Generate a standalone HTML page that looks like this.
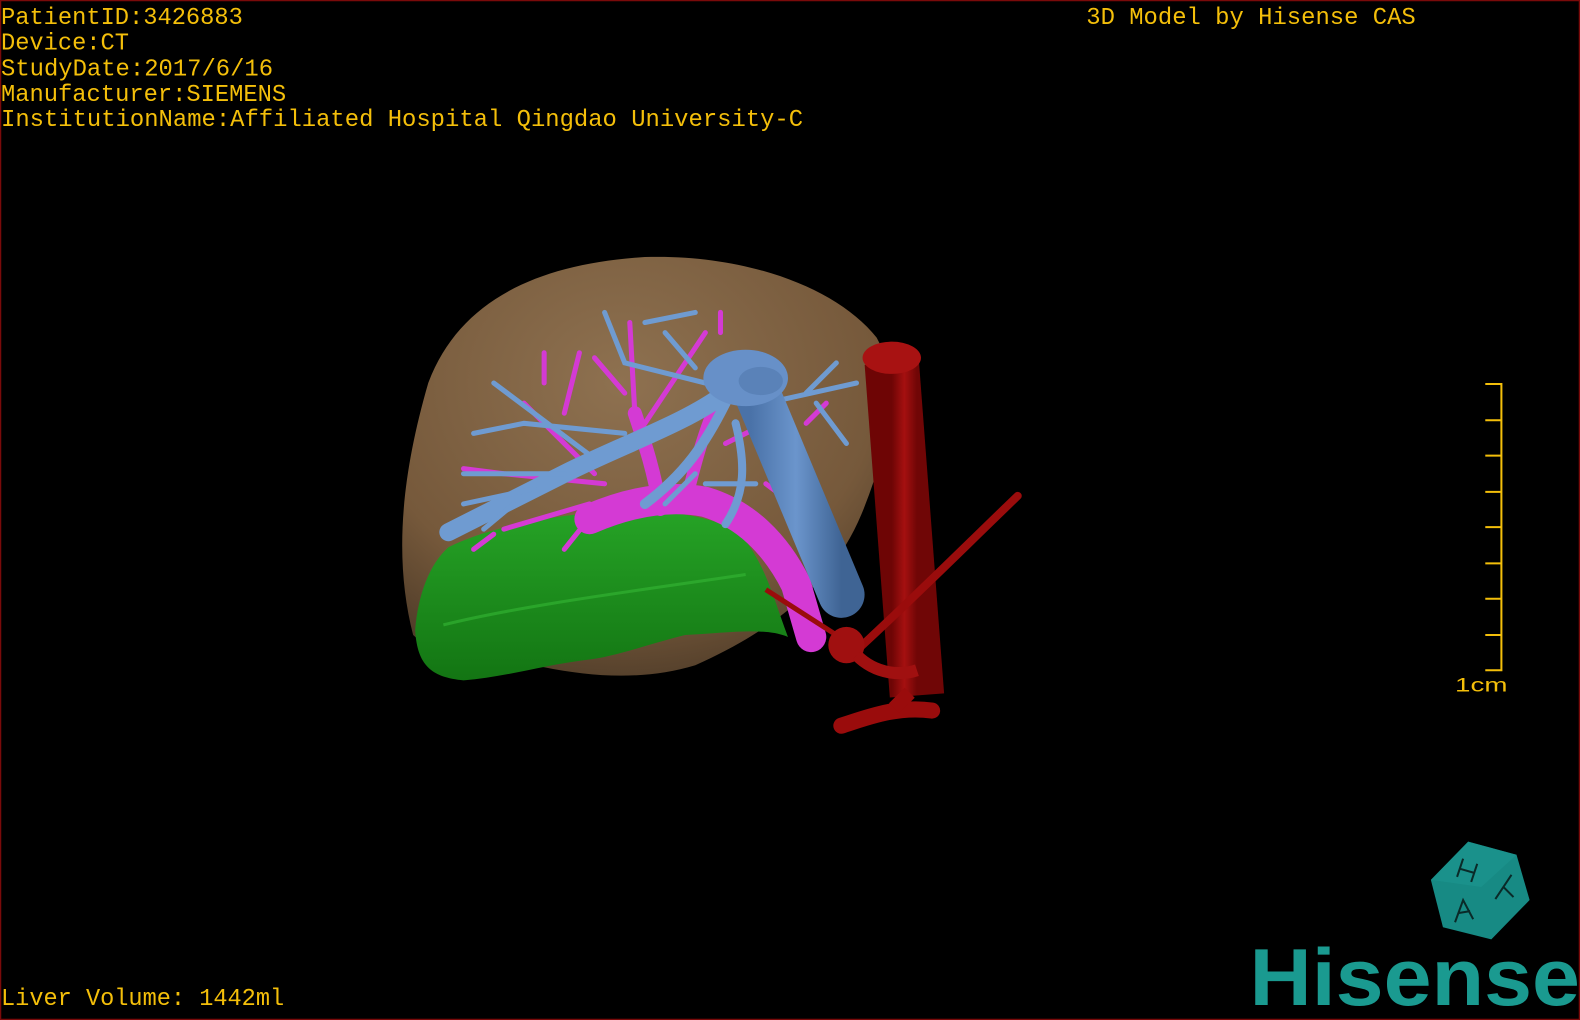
<!DOCTYPE html>
<html><head><meta charset="utf-8"><style>
html,body{margin:0;padding:0;background:#000;width:1580px;height:1020px;overflow:hidden}
svg{display:block}
</style></head><body>
<svg width="1580" height="1020" viewBox="0 0 1568 1012" preserveAspectRatio="none" xmlns="http://www.w3.org/2000/svg">
<defs>
<radialGradient id="liv" cx="0.45" cy="0.3" r="0.75">
<stop offset="0" stop-color="#8e7150"/><stop offset="0.7" stop-color="#76593b"/><stop offset="1" stop-color="#4e3b28"/>
</radialGradient>
<linearGradient id="grn" x1="0" y1="0" x2="0" y2="1">
<stop offset="0" stop-color="#26a326"/><stop offset="1" stop-color="#137513"/>
</linearGradient>
<linearGradient id="ivc" x1="0" y1="0" x2="1" y2="0">
<stop offset="0" stop-color="#4a72a8"/><stop offset="0.5" stop-color="#6b95cc"/><stop offset="1" stop-color="#3f6494"/>
</linearGradient>
<linearGradient id="ao" x1="0" y1="0" x2="1" y2="0">
<stop offset="0" stop-color="#6e0505"/><stop offset="0.5" stop-color="#a51010"/><stop offset="1" stop-color="#700606"/>
</linearGradient>
</defs>
<rect x="0.5" y="0.5" width="1567" height="1011" fill="#000" stroke="#7a0a0a" stroke-width="1.5"/>

<path d="M410,630 C392,560 396,480 425,380 C455,300 530,262 640,255 C740,252 830,285 870,335 C895,380 880,450 855,510 C830,570 780,620 690,660 C640,675 590,672 540,662 C480,652 430,650 410,630 Z" fill="url(#liv)"/>

<path d="M412,625 C415,590 426,560 445,543 C480,525 540,512 600,508 C660,505 705,510 735,530 C760,560 768,595 782,632 C760,622 720,628 680,630 C640,640 610,652 580,655 C540,660 500,672 460,675 C428,672 414,660 412,625 Z" fill="url(#grn)"/>
<path d="M440,620 C520,600 640,585 740,570" stroke="#35b835" stroke-width="3" fill="none" opacity="0.6"/>

<g stroke="#d43ad4" fill="none" stroke-linecap="round">
<path d="M585,515 C620,500 660,490 700,498 C740,510 770,540 790,580 L805,632" stroke-width="30"/>
<path d="M655,505 C650,470 640,440 630,410" stroke-width="14"/>
<path d="M680,500 C690,460 700,420 720,380" stroke-width="12"/>
<g stroke-width="5">
<path d="M630,410 L625,320"/><path d="M640,420 L700,330"/><path d="M600,480 L500,470 L460,465"/>
<path d="M590,470 L520,400"/><path d="M585,500 L500,525"/><path d="M580,520 L560,545"/>
<path d="M560,410 L575,350"/><path d="M540,380 L540,350"/><path d="M720,440 L760,420"/>
<path d="M760,480 L800,510"/><path d="M490,530 L470,545"/><path d="M800,420 L820,400"/>
<path d="M715,330 L715,310"/><path d="M620,390 L590,355"/>
</g></g>

<g stroke="#6f9bd1" fill="none" stroke-linecap="round">
<path d="M720,390 C680,420 620,440 560,470 C520,490 480,510 445,528" stroke-width="18"/>
<path d="M720,400 C700,440 680,470 640,500" stroke-width="10"/>
<path d="M730,420 C740,460 740,490 720,520" stroke-width="8"/>
<g stroke-width="5">
<path d="M700,380 L620,360 L600,310"/><path d="M620,430 L520,420 L470,430"/>
<path d="M590,455 L490,380"/><path d="M560,470 L460,470"/><path d="M530,485 L460,500"/>
<path d="M690,365 L660,330"/><path d="M760,400 L850,380"/><path d="M800,390 L830,360"/>
<path d="M810,400 L840,440"/><path d="M690,470 L660,500"/><path d="M700,480 L750,480"/>
<path d="M510,500 L480,525"/><path d="M640,320 L690,310"/>
</g></g>
<path d="M745,375 L835,590" stroke="url(#ivc)" stroke-width="46" stroke-linecap="round" fill="none"/>
<ellipse cx="740" cy="375" rx="42" ry="28" fill="#6790c8"/>
<ellipse cx="755" cy="378" rx="22" ry="14" fill="#5a82b8"/>

<path d="M885,360 L910,690" stroke="url(#ao)" stroke-width="54" fill="none"/>
<ellipse cx="885" cy="355" rx="29" ry="16" fill="#a81212"/>
<path d="M1010,492 C960,540 900,600 845,650" stroke="#9a0c0c" stroke-width="8" fill="none" stroke-linecap="round"/>
<path d="M760,585 L830,630" stroke="#9a0c0c" stroke-width="5" fill="none"/>
<circle cx="840" cy="640" r="18" fill="#a01010"/>
<path d="M850,650 C870,670 895,670 910,665" stroke="#a01010" stroke-width="12" fill="none"/>
<path d="M835,720 C860,712 890,700 925,705" stroke="#9a0c0c" stroke-width="16" fill="none" stroke-linecap="round"/>
<path d="M890,690 L900,700" stroke="#9a0c0c" stroke-width="22"/>

<g fill="#f4bf0a" font-family="Liberation Mono, monospace" font-size="23.5">
<text x="1" y="24" textLength="240" lengthAdjust="spacingAndGlyphs">PatientID:3426883</text>
<text x="1" y="49" textLength="127" lengthAdjust="spacingAndGlyphs">Device:CT</text>
<text x="1" y="75" textLength="270" lengthAdjust="spacingAndGlyphs">StudyDate:2017/6/16</text>
<text x="1" y="100" textLength="283" lengthAdjust="spacingAndGlyphs">Manufacturer:SIEMENS</text>
<text x="1" y="125" textLength="796" lengthAdjust="spacingAndGlyphs">InstitutionName:Affiliated Hospital Qingdao University-C</text>
<text x="1078" y="24" textLength="327" lengthAdjust="spacingAndGlyphs">3D Model by Hisense CAS</text>
<text x="1" y="997" textLength="281" lengthAdjust="spacingAndGlyphs">Liver Volume: 1442ml</text>
</g>

<g stroke="#f4bf0a" stroke-width="2" fill="none">
<path d="M1474,381 L1490,381 L1490,665 L1474,665"/>
<path d="M1474,417 H1490 M1474,452 H1490 M1474,488 H1490 M1474,523 H1490 M1474,559 H1490 M1474,594 H1490 M1474,630 H1490"/>
</g>
<text x="1444" y="686" fill="#f4bf0a" font-family="Liberation Sans, sans-serif" font-size="19" textLength="52" lengthAdjust="spacingAndGlyphs">1cm</text>

<polygon points="1457,835 1505,848 1518,893 1480,932 1432,920 1420,873" fill="#178a84"/>
<polygon points="1457,835 1505,848 1470,880 1420,873" fill="#1c9690" opacity="0.6"/>
<g stroke="#0a2a28" stroke-width="2" fill="none">
<path d="M1452,852 L1446,870 M1466,857 L1460,875 M1449,862 L1463,866"/>
<path d="M1500,868 L1492,880 L1502,890 M1492,880 L1484,892"/>
<path d="M1444,915 L1452,893 L1462,912 M1447,906 L1459,904"/>
</g>
<text x="1240" y="997" fill="#1a9a90" font-family="Liberation Sans, sans-serif" font-weight="bold" font-size="80" textLength="328" lengthAdjust="spacingAndGlyphs">Hisense</text>
</svg>
</body></html>
